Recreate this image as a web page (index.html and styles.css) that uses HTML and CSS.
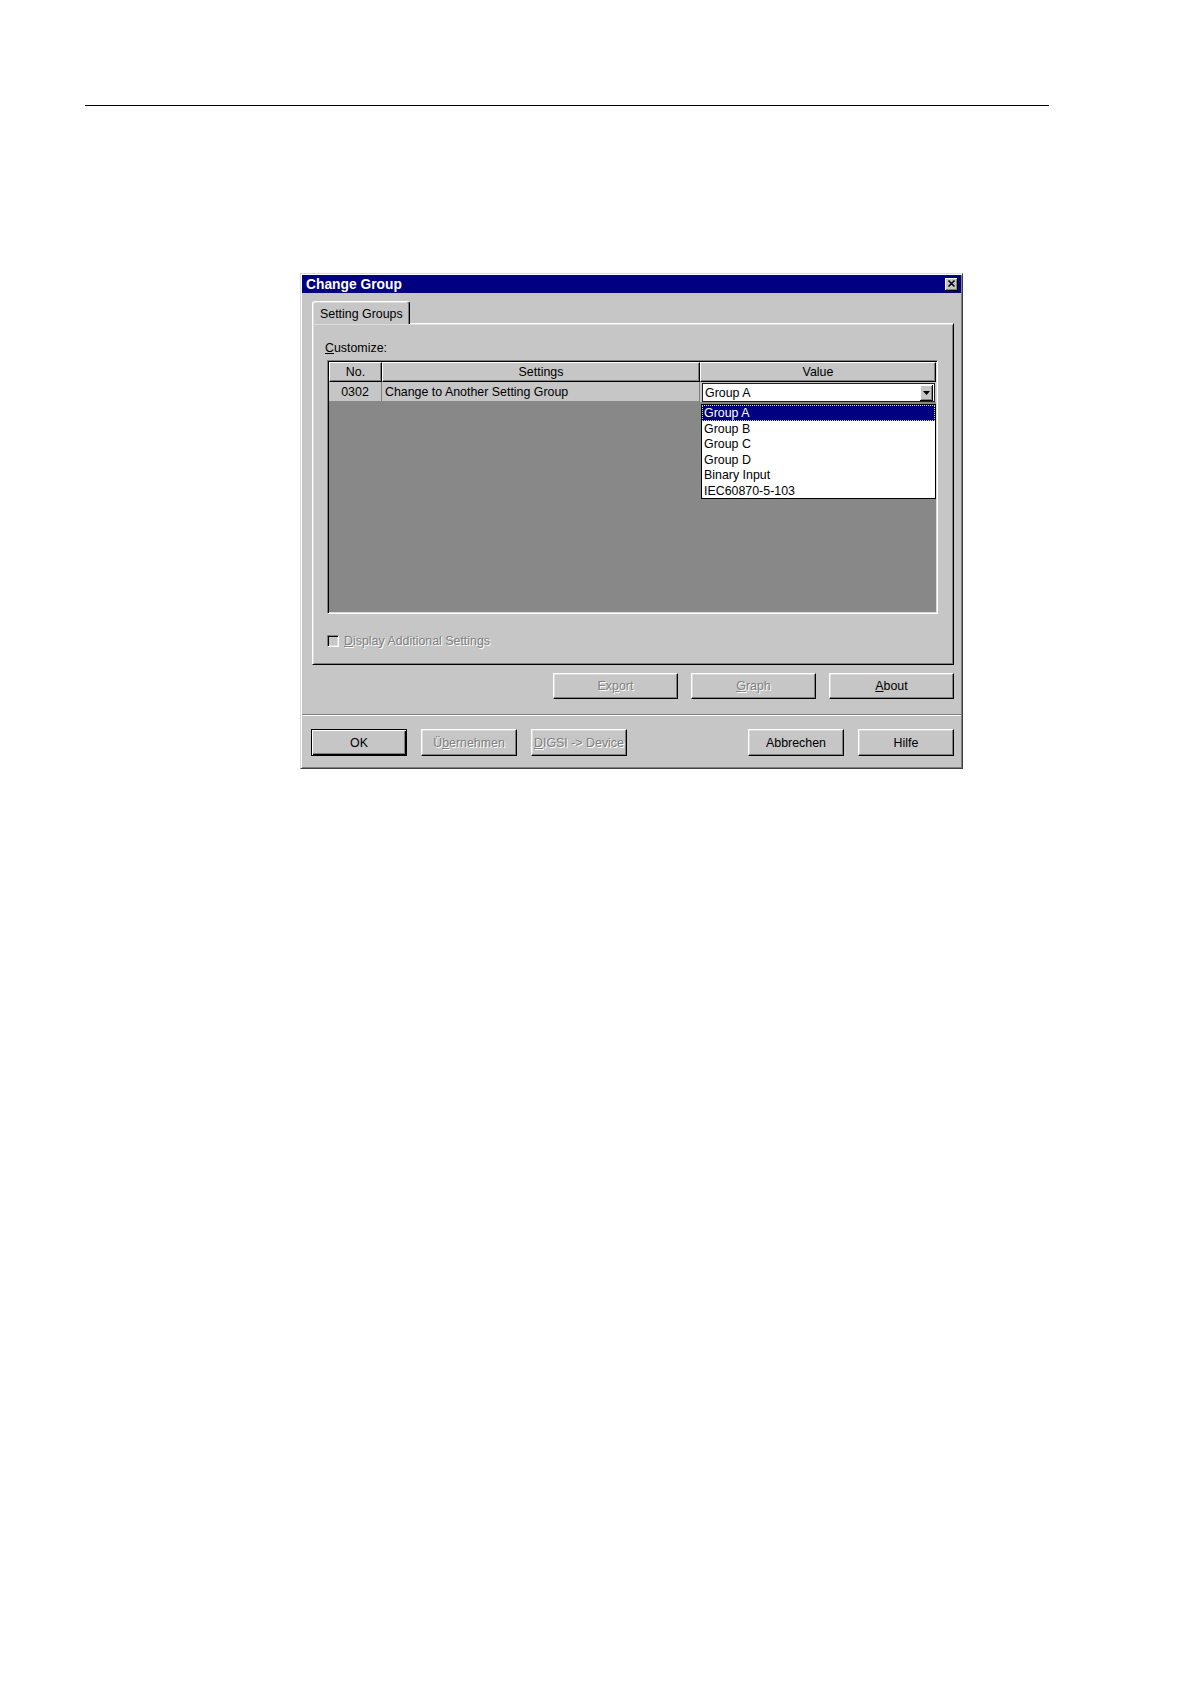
FILE: index.html
```html
<!DOCTYPE html>
<html>
<head>
<meta charset="utf-8">
<link rel="stylesheet" href="styles.css">
</head>
<body>
<div class="rule"></div>
<div class="dialog">
  <div class="titlebar">
    <span class="title">Change Group</span>
    <span class="close"><svg width="11" height="11" viewBox="0 0 11 11"><path d="M2.5 2.5 L8.5 8.5 M8.5 2.5 L2.5 8.5" stroke="#000" stroke-width="1.6" fill="none"/></svg></span>
  </div>
  <div class="client">
    <div class="tabs"><div class="tab">Setting Groups</div></div>
    <div class="panel">
      <div class="label"><u>C</u>ustomize:</div>
      <div class="grid">
        <div class="grid-head">
          <div class="hcell c-no">No.</div>
          <div class="hcell c-set">Settings</div>
          <div class="hcell c-val">Value</div>
        </div>
        <div class="grid-row">
          <div class="cell c-no no">0302</div>
          <div class="cell c-set set">Change to Another Setting Group</div>
          <div class="cell c-val val">
            <div class="combo">
              <span>Group A</span>
              <span class="arrow"><svg width="7" height="4" viewBox="0 0 7 4"><polygon points="0,0 7,0 3.5,4" fill="#000"/></svg></span>
            </div>
            <div class="dropdown">
              <div class="item sel">Group A</div>
              <div class="item">Group B</div>
              <div class="item">Group C</div>
              <div class="item">Group D</div>
              <div class="item">Binary Input</div>
              <div class="item">IEC60870-5-103</div>
            </div>
          </div>
        </div>
      </div>
      <div class="checkrow">
        <span class="checkbox"></span>
        <span class="disabled"><u>D</u>isplay Additional Settings</span>
      </div>
    </div>
    <div class="btnrow">
      <div class="btn wide"><span class="disabled">Ex<u>p</u>ort</span></div>
      <div class="btn wide"><span class="disabled"><u>G</u>raph</span></div>
      <div class="btn wide"><span><u>A</u>bout</span></div>
    </div>
  </div>
  <div class="sep"></div>
  <div class="footer">
    <div class="btn small default"><span>OK</span></div>
    <div class="btn small"><span class="disabled">Ü<u>b</u>ernehmen</span></div>
    <div class="btn small"><span class="disabled"><u>D</u>IGSI -&gt; Device</span></div>
    <div class="btn small push"><span>Abbrechen</span></div>
    <div class="btn small"><span>Hilfe</span></div>
  </div>
</div>
</body>
</html>
```
FILE: styles.css
```css
* { box-sizing: border-box; }
body {
  margin: 0;
  background: #fff;
  font-family: "Liberation Sans", Arial, sans-serif;
  font-size: 12.4px;
  color: #000;
}
.rule {
  margin: 105px 0 0 85px;
  width: 964px;
  height: 1px;
  background: #000;
}
.dialog {
  margin: 167px 0 0 300px;
  width: 663px;
  height: 496px;
  background: #c6c6c6;
  border: 1px solid;
  border-color: #dcdcdc #404040 #404040 #dcdcdc;
  box-shadow: inset 1px 1px #fff, inset -1px -1px #808080;
  padding: 1px;
  display: flex;
  flex-direction: column;
}
.titlebar {
  height: 18px;
  background: #000080;
  color: #fff;
  display: flex;
  align-items: center;
  justify-content: space-between;
  padding: 0 3px 0 4px;
}
.title {
  font-weight: bold;
  font-size: 13.8px;
}
.close {
  width: 13px;
  height: 13px;
  background: #c6c6c6;
  box-shadow: inset -1px -1px #000, inset 1px 1px #fff, inset -2px -2px #808080;
  display: flex;
  align-items: center;
  justify-content: center;
  padding: 0 1px 1px 0;
}
.close svg { display: block; }
.client {
  padding: 8px 7px 0 10px;
}
.tabs {
  display: flex;
  height: 22px;
}
.tab {
  position: relative;
  z-index: 1;
  width: 98px;
  height: 23px;
  background: #c6c6c6;
  border-top: 1px solid #fff;
  border-left: 1px solid #fff;
  border-right: 1px solid #000;
  border-radius: 3px 3px 0 0;
  box-shadow: inset -1px 0 #808080, inset 1px 1px #dcdcdc;
  padding: 2px 0 0 7px;
  line-height: 20px;
}
.panel {
  height: 342px;
  border: 1px solid;
  border-color: #fff #000 #000 #fff;
  box-shadow: inset 1px 1px #dcdcdc, inset -1px -1px #808080;
  padding: 16px 14px 0 14px;
}
.label {
  height: 16px;
  line-height: 16px;
  margin: 0 0 4px -2px;
}
.grid {
  width: 611px;
  height: 254px;
  border: 1px solid;
  border-color: #808080 #fff #fff #808080;
  box-shadow: inset 1px 1px #000, inset -1px -1px #dcdcdc;
  background: #888;
  padding: 1px;
}
.grid-head, .grid-row {
  display: flex;
  height: 20px;
}
.c-no { width: 53px; }
.c-set { width: 318px; }
.c-val { width: 236px; }
.hcell {
  height: 20px;
  background: #c6c6c6;
  border-top: 1px solid #fff;
  border-left: 1px solid #fff;
  border-right: 1px solid #000;
  border-bottom: 1px solid #000;
  box-shadow: inset -1px -1px #808080;
  text-align: center;
  line-height: 19px;
}
.cell {
  height: 19px;
  line-height: 20px;
  background: #c6c6c6;
}
.no {
  text-align: center;
  border-right: 1px solid #808080;
}
.set {
  padding-left: 3px;
  border-right: 1px solid #808080;
}
.val {
  position: relative;
  background: #c6c6c6;
  padding: 1px 1px 0 2px;
  height: 20px;
}
.combo {
  height: 19px;
  background: #fff;
  border: 1px solid #202020;
  display: flex;
  align-items: center;
  justify-content: space-between;
  padding: 0 1px 0 2px;
  line-height: 18px;
}
.arrow {
  width: 13px;
  height: 16px;
  background: #c6c6c6;
  box-shadow: inset -1px -1px #000, inset 1px 1px #fff, inset -2px -2px #808080;
  display: flex;
  align-items: center;
  justify-content: center;
}
.arrow svg { display: block; }
.dropdown {
  position: absolute;
  left: 1px;
  top: 22px;
  width: 235px;
  height: 95px;
  background: #fff;
  border: 1px solid #000;
  z-index: 2;
}
.item {
  height: 15.5px;
  line-height: 16px;
  padding-left: 2px;
}
.item.sel {
  background: #000080;
  color: #fff;
  border: 1px dotted #d8d8a0;
  line-height: 14px;
  padding-left: 1px;
}
.checkrow {
  display: flex;
  align-items: center;
  gap: 5px;
  height: 16px;
  margin-top: 19px;
}
.checkbox {
  width: 12px;
  height: 12px;
  border: 1px solid;
  border-color: #808080 #fff #fff #808080;
  box-shadow: inset 1px 1px #000, inset -1px -1px #dcdcdc;
  background: #c6c6c6;
}
.disabled {
  color: #808080;
  text-shadow: 1px 1px 0 #fff;
}
.btnrow {
  display: flex;
  justify-content: flex-end;
  gap: 13px;
  margin-top: 8px;
}
.btn {
  height: 26px;
  background: #c6c6c6;
  border: 1px solid;
  border-color: #fff #000 #000 #fff;
  box-shadow: inset -1px -1px #808080, inset 1px 1px #dcdcdc;
  display: flex;
  align-items: center;
  justify-content: center;
}
.btn.wide { width: 125px; }
.btn.small { width: 96px; height: 27px; }
.btn.default {
  border: 1px solid #000;
  box-shadow: inset 1px 1px #fff, inset -1px -1px #000, inset -2px -2px #808080;
}
.sep {
  margin-top: 15px;
  height: 2px;
  border-top: 1px solid #808080;
  border-bottom: 1px solid #fff;
}
.footer {
  display: flex;
  gap: 14px;
  padding: 13px 7px 0 9px;
}
.push { margin-left: auto; }
```
